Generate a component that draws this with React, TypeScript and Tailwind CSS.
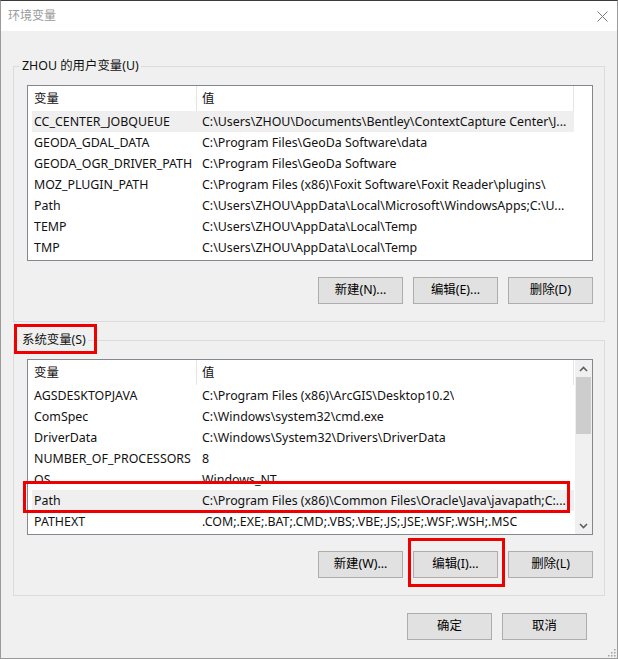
const userVars: [string, string][] = [
  ["CC_CENTER_JOBQUEUE", "C:\\Users\\ZHOU\\Documents\\Bentley\\ContextCapture Center\\J..."],
  ["GEODA_GDAL_DATA", "C:\\Program Files\\GeoDa Software\\data"],
  ["GEODA_OGR_DRIVER_PATH", "C:\\Program Files\\GeoDa Software"],
  ["MOZ_PLUGIN_PATH", "C:\\Program Files (x86)\\Foxit Software\\Foxit Reader\\plugins\\"],
  ["Path", "C:\\Users\\ZHOU\\AppData\\Local\\Microsoft\\WindowsApps;C:\\U..."],
  ["TEMP", "C:\\Users\\ZHOU\\AppData\\Local\\Temp"],
  ["TMP", "C:\\Users\\ZHOU\\AppData\\Local\\Temp"],
];

const sysVars: [string, string][] = [
  ["AGSDESKTOPJAVA", "C:\\Program Files (x86)\\ArcGIS\\Desktop10.2\\"],
  ["ComSpec", "C:\\Windows\\system32\\cmd.exe"],
  ["DriverData", "C:\\Windows\\System32\\Drivers\\DriverData"],
  ["NUMBER_OF_PROCESSORS", "8"],
  ["OS", "Windows_NT"],
  ["Path", "C:\\Program Files (x86)\\Common Files\\Oracle\\Java\\javapath;C:..."],
  ["PATHEXT", ".COM;.EXE;.BAT;.CMD;.VBS;.VBE;.JS;.JSE;.WSF;.WSH;.MSC"],
];

function Btn({ label }: { label: string }) {
  return (
    <button className="w-[85px] h-[27px] bg-[#e1e1e1] border border-[#adadad] text-black flex items-center justify-center">
      {label}
    </button>
  );
}

function Chevron({ up }: { up?: boolean }) {
  return (
    <svg width="9" height="6" viewBox="0 0 9 6">
      <path
        d={up ? "M1 5 L4.5 1.5 L8 5" : "M1 1 L4.5 4.5 L8 1"}
        fill="none"
        stroke="#606060"
        strokeWidth="1.6"
      />
    </svg>
  );
}

function VarList({ rows, hi, scroll }: { rows: [string, string][]; hi: number; scroll?: boolean }) {
  return (
    <div className="h-[176px] border border-[#828790] bg-white flex">
      <div className="w-[546px] flex flex-col">
        {/* header */}
        <div className="h-[25px] flex items-center border-r border-[#e5e5e5] shrink-0">
          <div className="w-[169px] h-full pl-[6px] pt-[2px] flex items-center border-r border-[#e5e5e5]">变量</div>
          <div className="pl-[5px] pt-[2px]">值</div>
        </div>
        {rows.map(([k, v], i) => (
          <div
            key={k + i}
            className={
              "ml-[4px] w-[542px] h-[21px] pt-[2px] flex items-center shrink-0 whitespace-nowrap " +
              (i === hi ? "bg-[#efefef]" : "")
            }
          >
            <div className="w-[168px] pl-[2px] overflow-hidden">{k}</div>
            <div className="pl-[2px] overflow-hidden">{v}</div>
          </div>
        ))}
      </div>
      <div className="w-[18px] flex justify-end">
        {scroll && (
          <div className="w-[17px] h-full bg-[#f0f0f0] flex flex-col">
            <div className="h-[17px] flex items-center justify-center">
              <Chevron up />
            </div>
            <div className="h-[57px] mx-[1px] bg-[#cdcdcd]" />
            <div className="flex-1" />
            <div className="h-[17px] flex items-center justify-center">
              <Chevron />
            </div>
          </div>
        )}
      </div>
    </div>
  );
}

function Group({
  title,
  rows,
  hi,
  scroll,
  buttons,
  className,
}: {
  title: string;
  rows: [string, string][];
  hi: number;
  scroll?: boolean;
  buttons: string[];
  className?: string;
}) {
  return (
    <fieldset className={"w-[592px] border border-[#dcdcdc] p-0 " + (className ?? "")}>
      <legend className="ml-[6px] px-[2px] leading-[16px]">{title}</legend>
      <div className="pt-[11px] pl-[13px] pr-[11px] pb-[17px]">
        <VarList rows={rows} hi={hi} scroll={scroll} />
        <div className="mt-[16px] flex justify-end gap-[10px]">
          {buttons.map((b) => (
            <Btn key={b} label={b} />
          ))}
        </div>
      </div>
    </fieldset>
  );
}

export default function App() {
  return (
    <div className="relative w-[618px] h-[659px] bg-[#f0f0f0] border-t border-t-[#3a3a3a] border-x border-b border-[#9a9a9a] text-[12.4px] text-[#111] font-['Noto_Sans','Noto_Sans_CJK_SC',sans-serif] overflow-hidden">
      {/* title bar */}
      <div className="h-[30px] bg-white flex items-center justify-between pl-[7px] pr-[9px]">
        <span className="text-[#9a9a9a] text-[12px]">环境变量</span>
        <svg width="11" height="11" viewBox="0 0 11 11">
          <path d="M0.5 0.5 L10.5 10.5 M10.5 0.5 L0.5 10.5" stroke="#7a7a7a" strokeWidth="1" />
        </svg>
      </div>

      <div className="pl-[12px] flex flex-col">
        <Group
          className="mt-[27px]"
          title="ZHOU 的用户变量(U)"
          rows={userVars}
          hi={0}
          buttons={["新建(N)...", "编辑(E)...", "删除(D)"]}
        />
        <Group
          className="mt-[10px]"
          title="系统变量(S)"
          rows={sysVars}
          hi={5}
          scroll
          buttons={["新建(W)...", "编辑(I)...", "删除(L)"]}
        />
        <div className="mt-[17px] pr-[30px] flex justify-end gap-[10px]">
          <Btn label="确定" />
          <Btn label="取消" />
        </div>
      </div>

      {/* red annotation boxes */}
      <div className="absolute left-[13px] top-[323px] w-[83px] h-[30px] border-[3px] border-[#ee0000]" />
      <div className="absolute left-[22px] top-[480px] w-[547px] h-[32px] border-[3px] border-[#ee0000]" />
      <div className="absolute left-[407px] top-[537px] w-[97px] h-[49px] border-[3px] border-[#ee0000]" />

      {/* resize grip */}
      <svg className="absolute right-[1px] bottom-[1px]" width="10" height="10" viewBox="0 0 10 10">
        {[
          [8, 2],
          [8, 5],
          [5, 5],
          [8, 8],
          [5, 8],
          [2, 8],
        ].map(([x, y]) => (
          <rect key={x + "-" + y} x={x} y={y} width="1.5" height="1.5" fill="#a0a0a0" />
        ))}
      </svg>
    </div>
  );
}
